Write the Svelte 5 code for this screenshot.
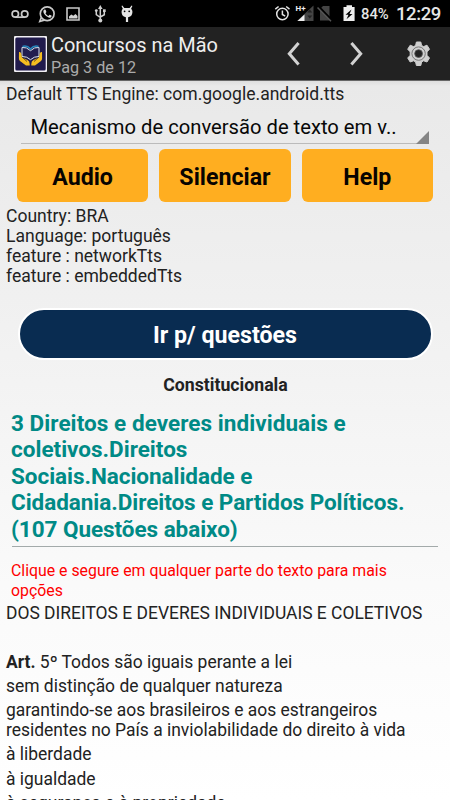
<script>
  const details = ['Country: BRA', 'Language: português', 'feature : networkTts', 'feature : embeddedTts'];
  const heading = [
    { text: '3 Direitos e deveres individuais e', spacing: 0.06 },
    { text: 'coletivos.Direitos', spacing: 0 },
    { text: 'Sociais.Nacionalidade e', spacing: -0.05 },
    { text: 'Cidadania.Direitos e Partidos Políticos.', spacing: -0.05 },
    { text: '(107 Questões abaixo)', spacing: -0.05 }
  ];
</script>

<div class="screen">
  <div class="status">
    <svg class="left" width="150" height="27" viewBox="0 0 150 27">
      <g fill="none" stroke="#c9c9c9" stroke-width="1.7">
        <circle cx="15.3" cy="14" r="3.2" /><circle cx="24.7" cy="14" r="3.2" /><path d="M15.3 17.2h9.4" />
        <circle cx="47.2" cy="13.8" r="6.9" />
        <path d="M41.3 17.5l-1.5 4 4.3-1.2" />
      </g>
      <path d="M44.3 9.5c-1.5 1-1.2 3.2.6 5.2s4.3 3.5 5.7 2.8c1-.5 1.2-1.6.8-1.9l-1.8-.9-1.2 1.2c-1.3-.5-2.4-1.5-2.9-2.7l.9-1.1-.8-2.3z" fill="#ddd" />
      <path d="M67 8h12v12H67z" fill="none" stroke="#c9c9c9" stroke-width="1.6" />
      <path d="M69 18.500v-2l2.300-2 2 1.200 2.200-1.700 2 2v2.500z" fill="#d4d4d4" />
      <g fill="none" stroke="#d0d0d0" stroke-width="1.5">
        <path d="M100.3 8v12M100.3 17.5l-4-2.8V11M100.3 17l4-2.3V11" />
      </g>
      <path d="M98 9l2.3-4 2.3 4z" fill="#d0d0d0" /><circle cx="100.3" cy="20.6" r="2" fill="#d0d0d0" />
      <circle cx="96.3" cy="10.6" r="1.4" fill="#d0d0d0" /><path d="M103 9.3h2.7v2.7H103z" fill="#d0d0d0" />
      <path d="M122.300 5.500l2 2.500h5.300l2-2.500.8.6-1.300 2.600c.8.800 1.200 1.600 1.300 2.500a5.500 5.500 0 0 1-4.300 6V22h-2.200v-4.800a5.500 5.500 0 0 1-4.300-6c.1-.9.500-1.700 1.200-2.500l-1.300-2.600z" fill="#e5e5e5" />
      <circle cx="124.600" cy="11.300" r=".9" /><circle cx="129.200" cy="11.300" r=".9" />
    </svg>
    <svg class="right" width="86" height="27" viewBox="270 0 86 27">
      <g fill="none" stroke="#e4e4e4" stroke-width="1.5">
        <circle cx="282.400" cy="14" r="5.700" /><path d="M282.400 10.500v4l2.800 1.600M275.300 9.200l3.300-2.700M289.500 9.200l-3.300-2.700" />
      </g>
      <path d="M297 21L313.500 5.500V21z" fill="#454545" /><path d="M297.500 21l7-6.500V21z" fill="#eee" />
      <path d="M307.300 12.500l2.500-3 2.500 3zM307.300 15.500l2.500 3 2.500-3z" fill="#222" />
      <text x="295.500" y="11" font-size="8" font-weight="700" fill="#eee">H+</text>
      <path d="M320 9l3-3h6.500v14.500H320z" fill="#444" /><path d="M318.500 6.500L332 20.500" stroke="#000" stroke-width="2.500" /><path d="M317.500 7.500L331 21.200" stroke="#555" stroke-width="1.500" />
      <path d="M343.500 7h3V5.300h5.500V7h2.600v14h-11.100z" fill="#eee" />
      <path d="M351.500 9.500l-6 5.200h3l-2 4.600 6-5.400h-3z" fill="#000" />
    </svg>
    <span class="battery">84%</span><span class="clock">12:29</span>
  </div>

  <header>
    <svg class="logo" width="33" height="36" viewBox="0 0 33 36">
      <rect width="33" height="36" rx="1" fill="#f1eff4" /><rect x="1.300" y="1.500" width="30.400" height="33" rx="1.500" fill="#211b4c" />
      <path d="M8 11.500q4.500-.8 8.500 3.200q4-4 8.500-3.200v9q-5-.2-8.500 3.200q-3.500-3.400-8.500-3.200z" fill="#221d50" stroke="#dbe5ef" stroke-width="1" />
      <path d="M8.500 10.500q4.500-1.500 8 2.500q3.500-4 8-2.500" fill="none" stroke="#2587bd" stroke-width="1.500" />
      <path d="M5 16q1.800-.5 2.200 1.500l.8 4 5.500 2.600q2.200 1.200 2.200 3.800v1.600H12l-6-4.500q-1.200-1-1.100-3z" fill="#f3bd20" />
      <path d="M28 16q-1.800-.5-2.200 1.500l-.8 4-5.500 2.600q-2.200 1.200-2.200 3.800v1.600H21l6-4.500q1.200-1 1.100-3z" fill="#f3bd20" />
      <path d="M8.500 21.500l4.500 4M24.500 21.500l-4.500 4" stroke="#4a3820" stroke-width=".8" />
    </svg>
    <div class="titles"><div class="title">Concursos na Mão</div><div class="sub">Pag 3 de 12</div></div>
    <svg class="nav" width="155" height="53" viewBox="285 27 155 53">
      <g fill="none" stroke="#d2d2d2" stroke-width="3"><path d="M298.600 43l-9.300 10.700 9.300 10.700M351.400 43l9.300 10.700-9.300 10.700" /></g>
      <path d="M415.600 45.500l.8-3.500h4.400l.8 3.500 2 1.100 3.400-1.400 2.500 4-2.500 2.700v3.400l2.500 2.700-2.500 4-3.400-1.200-2 1.200-.8 3.500h-4.400l-.8-3.500-2-1.200-3.400 1.200-2.500-4 2.500-2.700v-3.400l-2.500-2.700 2.500-4 3.400 1.400z" fill="#cfcfcf" stroke="#cfcfcf" stroke-linejoin="round" />
      <circle cx="418.600" cy="53.600" r="6.700" fill="none" stroke="#777" stroke-width="1" />
      <circle cx="418.600" cy="53.600" r="3.900" fill="#222" stroke="#555" stroke-width=".8" />
    </svg>
  </header>

  <main>
    <div class="line engine">Default TTS Engine: com.google.android.tts</div>
    <div class="spinner"><span>Mecanismo de conversão de texto em v..</span></div>
    <div class="buttons"><button>Audio</button><button>Silenciar</button><button>Help</button></div>
    <div class="details">{#each details as text}<div class="line">{text}</div>{/each}</div>
    <button class="pill">Ir p/ questões</button>
    <div class="subject">Constitucionala</div>
    <h1>{#each heading as row}<div style:letter-spacing="{row.spacing}px">{row.text}</div>{/each}</h1>
    <div class="hint"><div>Clique e segure em qualquer parte do texto para mais</div><div>opções</div></div>
    <article>
      <p class="caps">DOS DIREITOS E DEVERES INDIVIDUAIS E COLETIVOS</p>
      <p class="art"><b>Art.</b> 5º Todos são iguais perante a lei</p>
      <p>sem distinção de qualquer natureza</p>
      <p>garantindo-se aos brasileiros e aos estrangeiros<br />residentes no País a inviolabilidade do direito à vida</p>
      <p>à liberdade</p>
      <p>à igualdade</p>
      <p>à segurança e à propriedade</p>
    </article>
  </main>
</div>

<style>
  :global(body) { margin: 0; overflow: hidden; }
  .screen { width: 450px; height: 800px; overflow: hidden; display: flex; flex-direction: column; font-family: Roboto, sans-serif; color: #222; background: #fff; white-space: nowrap; }
  .status { height: 27px; flex: none; display: flex; background: #000; color: #e6e6e6; line-height: 28px; }
  svg { display: block; flex: none; }
  .right { margin-left: 120px; }
  .battery { font-size: 14.8px; margin-left: 5px; width: 35px; line-height: 29px; font-weight: 500; }
  .clock { font-size: 18.5px; font-weight: 500; line-height: 29px; letter-spacing: -.4px; }
  header { height: 54px; flex: none; display: flex; background: #222; border-bottom: 1px solid #666; box-sizing: border-box; }
  .logo { margin: 9px 0 0 14px; }
  .titles { width: 234px; margin-left: 4px; padding-top: 5px; }
  .title { font-size: 19.950px; line-height: 26px; color: #eee; }
  .sub { font-size: 16.200px; line-height: 19px; color: #aaa; }
  main { flex: 1; min-height: 0; overflow: hidden; background: linear-gradient(#dedede, #e9e9e9 5px, #f0f0f0 30%, #fafafa 70%, #fff); }
  .line { font-size: 17.550px; line-height: 20.1px; }
  .engine { padding: 3.400px 0 0 6px; }
  .spinner { box-sizing: border-box; height: 40px; width: 408px; margin: 0 0 4.500px 21px; padding: 7px 0 0 9.500px; position: relative; border-bottom: 1px solid #bbb; font-size: 20.200px; line-height: 32px; color: #080808; }
  .spinner::after { content: ''; position: absolute; right: 0; bottom: -1px; border-left: 13px solid transparent; border-bottom: 13px solid #858585; }
  button { font: 700 23.200px/26px Roboto, sans-serif; border: 0; padding: 0; }
  .buttons { display: flex; gap: 11.200px; padding-left: 17px; }
  .buttons button { width: 131.200px; height: 53px; padding-top: 3px; border-radius: 6px; color: #080400; background: #ffae20; }
  .details { padding: 4px 0 0 6px; }
  .pill { display: block; box-sizing: border-box; width: 415px; height: 52px; margin: 21.600px 0 0 17.500px; border: 2px solid #fff; border-radius: 26px; background: #092c51; color: #fff; padding-top: 3px; }
  .subject { font-size: 17.700px; font-weight: 700; line-height: 20px; text-align: center; margin-top: 15.400px; padding-left: 1px; }
  h1 { margin: 14.200px 12px 0; padding: 0 0 3.800px; border-bottom: 1.500px solid #a3aaaa; font-size: 22.500px; line-height: 26.600px; color: #008a86; }
  h1 div { margin-left: -1px; }
  .hint { padding: 13.800px 0 0 11px; font-size: 15.850px; line-height: 19.400px; color: #f00; }
  article { padding: 3.400px 0 0 6px; font-size: 17.450px; line-height: 20.200px; }
  p { margin: 0 0 4px; }
  .art { margin-top: 28px; }
</style>
